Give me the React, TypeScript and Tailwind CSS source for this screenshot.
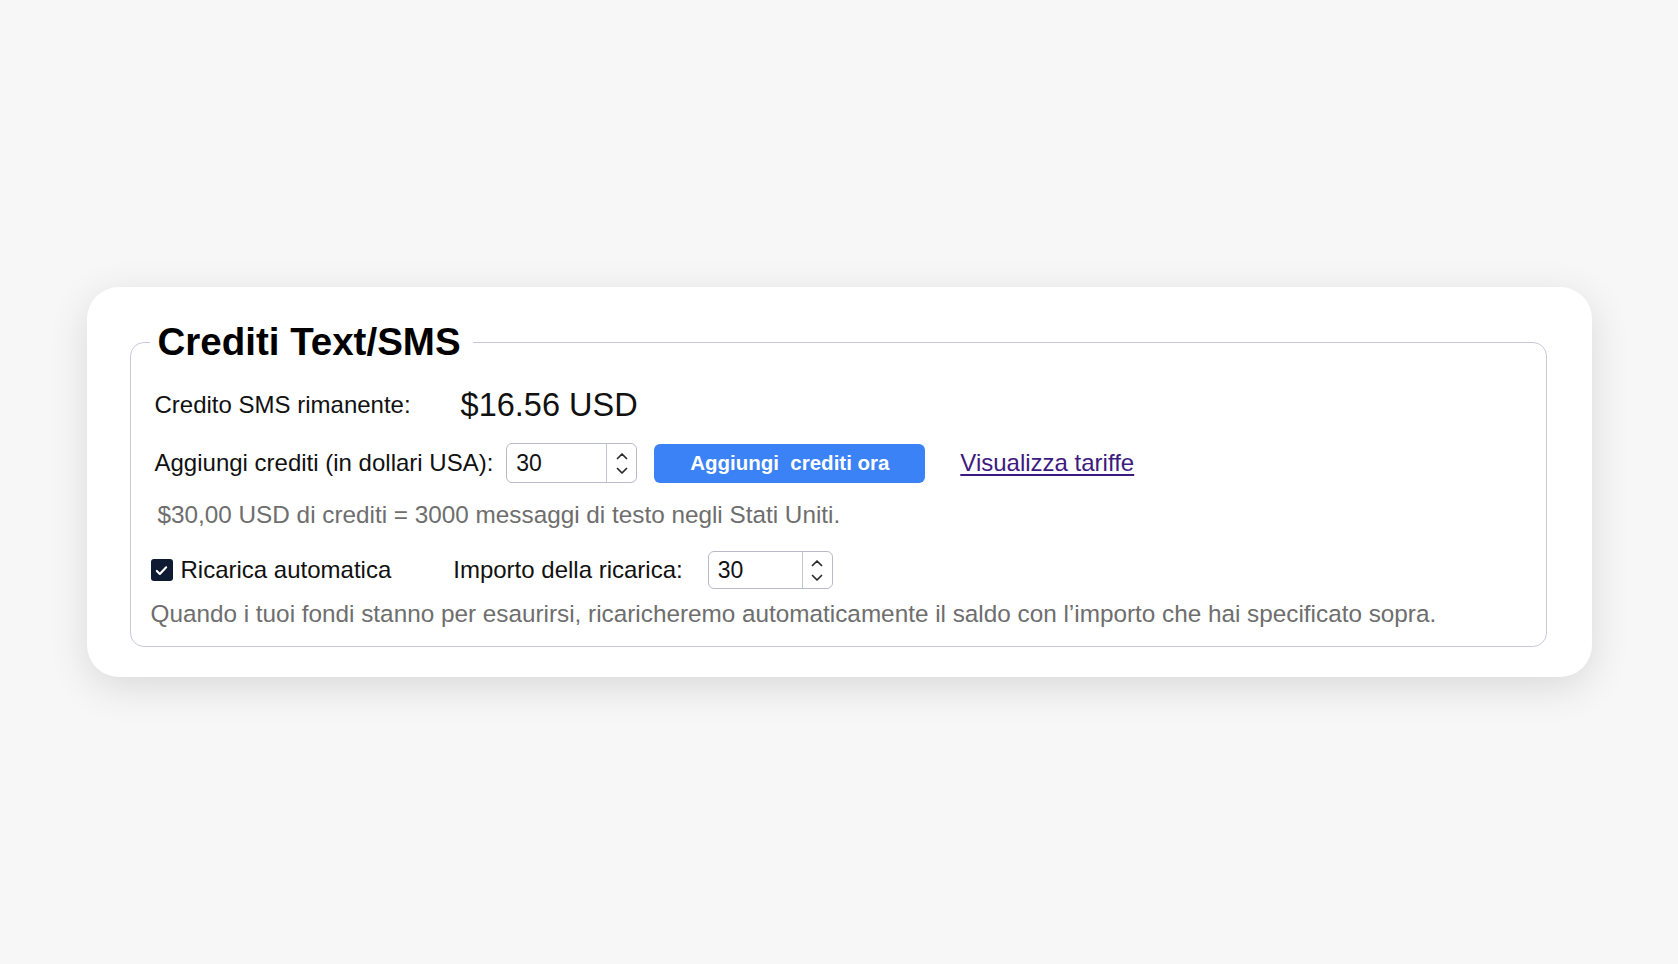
import { useState } from 'react'

function Chevron({ dir }: { dir: 'up' | 'down' }) {
  return (
    <svg className="w-[12px] h-[8px]" viewBox="0 0 12 8" fill="none" stroke="#2a2a2a" strokeWidth="1.7" strokeLinecap="round" strokeLinejoin="round">
      {dir === 'up' ? <path d="M1.5 6.5L6 2l4.5 4.5" /> : <path d="M1.5 1.5L6 6l4.5-4.5" />}
    </svg>
  )
}

interface NumberBoxProps {
  value: string
  onChange: (v: string) => void
  className: string
}

function NumberBox({ value, onChange, className }: NumberBoxProps) {
  const step = (d: number) => {
    const n = parseInt(value || '0', 10) + d
    onChange(String(Math.max(0, n)))
  }

  return (
    <div className={`flex items-stretch border border-[#b9b9cc] rounded-[6px] bg-white ${className}`}>
      <input
        type="text"
        value={value}
        onChange={(e) => onChange(e.target.value)}
        className="flex-1 min-w-0 pl-[9px] text-[23px] text-[#111] bg-transparent outline-none"
      />
      {/* Spinner */}
      <div className="w-[30px] border-l border-[#c4c4d4] flex flex-col items-center justify-center gap-[7px]">
        <button onClick={() => step(1)} className="flex">
          <Chevron dir="up" />
        </button>
        <button onClick={() => step(-1)} className="flex">
          <Chevron dir="down" />
        </button>
      </div>
    </div>
  )
}

export default function App() {
  const [amount, setAmount] = useState('30')
  const [reload, setReload] = useState('30')
  const [autoReload, setAutoReload] = useState(true)

  return (
    <div
      className="min-h-screen bg-[#f7f7f7] flex items-center justify-center text-[#111]"
      style={{ fontFamily: '"Liberation Sans", Arial, sans-serif' }}
    >
      <div className="w-[1505px] bg-white rounded-[32px] shadow-[0_10px_40px_rgba(0,0,0,0.12)] pl-[43px] pr-[45px] pt-[33px] pb-[30px]">
        <fieldset className="border border-[#c8c8dc] rounded-[14px] pl-[19px] pr-5 pb-[18px]">
          <legend className="pl-2 pr-3 text-[38.5px] leading-[44px] font-bold text-black">Crediti Text/SMS</legend>

          {/* Remaining credit */}
          <div className="flex items-center h-[40px] mt-[21px] pl-[5px]">
            <span className="text-[24px]">Credito SMS rimanente:</span>
            <span className="text-[32.5px] ml-[50px]">$16.56 USD</span>
          </div>

          {/* Add credits */}
          <div className="flex items-center h-[40px] mt-[18px] pl-[5px]">
            <span className="text-[24px]">Aggiungi crediti (in dollari USA):</span>
            <NumberBox value={amount} onChange={setAmount} className="w-[131px] h-[40px] ml-[13px]" />
            <button className="ml-[17px] w-[271px] h-[39px] rounded-[6px] bg-[#3b82f6] text-white font-bold text-[20.5px] whitespace-pre">
              Aggiungi  crediti ora
            </button>
            <a href="#" className="ml-[35px] text-[24px] text-[#3d1a80] underline underline-offset-[3px]">
              Visualizza tariffe
            </a>
          </div>

          <p className="mt-[18px] h-[28px] leading-[28px] pl-[8px] text-[24.3px] text-[#6e6e6e]">
            $30,00 USD di crediti = 3000 messaggi di testo negli Stati Uniti.
          </p>

          {/* Auto reload */}
          <div className="flex items-center h-[38px] mt-[22px] pl-[1px]">
            <button
              onClick={() => setAutoReload(!autoReload)}
              className={`w-[22px] h-[22px] rounded-[3px] flex items-center justify-center ${autoReload ? 'bg-[#0f1a33]' : 'border border-[#777] bg-white'}`}
            >
              {autoReload && (
                <svg className="w-[15px] h-[15px]" viewBox="0 0 16 16" fill="none" stroke="white" strokeWidth="2.2" strokeLinecap="round" strokeLinejoin="round">
                  <path d="M3 8.5l3.2 3.2L13 4.5" />
                </svg>
              )}
            </button>
            <span className="ml-[8px] text-[24px]">Ricarica automatica</span>
            <span className="ml-[62px] text-[24px]">Importo della ricarica:</span>
            <NumberBox value={reload} onChange={setReload} className="w-[125px] h-[38px] ml-[25px]" />
          </div>

          <p className="mt-[11px] h-[28px] leading-[28px] pl-[1px] text-[24.3px] text-[#6e6e6e]">
            Quando i tuoi fondi stanno per esaurirsi, ricaricheremo automaticamente il saldo con l’importo che hai specificato sopra.
          </p>
        </fieldset>
      </div>
    </div>
  )
}
